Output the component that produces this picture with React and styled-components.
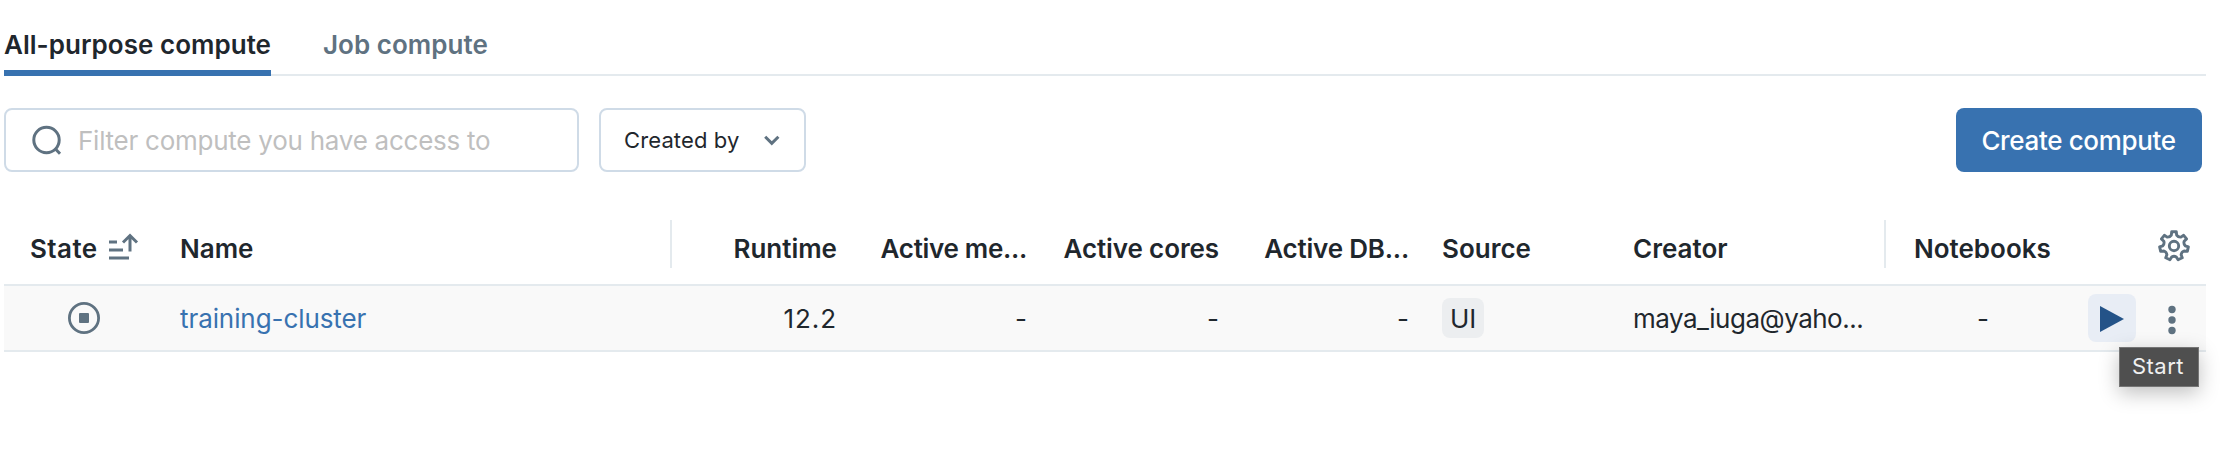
import React from "react";
import styled, { createGlobalStyle, css } from "styled-components";

const color = {
  text: "#1f272d",
  muted: "#5f7281",
  blue: "#3872b0",
  line: "#e4eaee",
  field: "#cfdbe7",
};

const GlobalStyle = createGlobalStyle`
  *, *::before, *::after { box-sizing: border-box; }
  body { margin: 0; background: #fff; }
  button, input { font: inherit; margin: 0; }
`;

const Page = styled.main`
  width: 2206px;
  min-height: 460px;
  padding-left: 4px;
  font-family: Inter, "Liberation Sans", sans-serif;
  font-size: 26px;
  line-height: 32px;
  color: ${color.text};
`;

const Tabs = styled.nav`
  display: flex;
  gap: 52px;
  height: 76px;
  padding-top: 29px;
  box-shadow: inset 0 -2px 0 ${color.line};
`;

const Tab = styled.button`
  display: block;
  padding: 0 0 9px;
  border: 0;
  border-bottom: 6px solid ${(p) => (p.$active ? color.blue : "transparent")};
  background: none;
  line-height: 32px;
  font-weight: 600;
  letter-spacing: 0.03px;
  white-space: nowrap;
  color: ${(p) => (p.$active ? color.text : color.muted)};
`;

const Toolbar = styled.div`
  display: flex;
  gap: 20px;
  padding: 32px 4px 0 0;
`;

const field = css`
  display: flex;
  align-items: center;
  height: 64px;
  border: 2px solid ${color.field};
  border-radius: 8px;
  background: #fff;
`;

const SearchField = styled.label`
  ${field}
  width: 575px;
  padding: 2px 0 0 26px;
  gap: 14px;
`;

const SearchInput = styled.input`
  flex: 1;
  min-width: 0;
  padding: 0;
  border: 0;
  outline: 0;
  background: none;
  letter-spacing: -0.25px;
  &::placeholder { color: #bfbfbf; opacity: 1; }
`;

const SelectButton = styled.button`
  ${field}
  width: 207px;
  justify-content: space-between;
  padding: 0 23px;
  font-size: 22px;
  letter-spacing: 0.12px;
  color: ${color.text};
`;

const PrimaryButton = styled.button`
  width: 246px;
  height: 64px;
  margin-left: auto;
  padding: 2px 1px 0 0;
  border: 0;
  border-radius: 8px;
  background: ${color.blue};
  color: #fff;
  font-weight: 500;
  letter-spacing: -0.35px;
`;

const Table = styled.section`
  margin-top: 32px;
`;

const columns = css`
  display: grid;
  grid-template-columns: 160px 508px 165px 190px 192px 190px 224px 253px 194px 126px;
  align-items: center;
`;

const HeaderRow = styled.div`
  ${columns}
  height: 82px;
  border-bottom: 2px solid ${color.line};
  font-weight: 600;
`;

const BodyRow = styled.div`
  ${columns}
  height: 66px;
  border-bottom: 2px solid ${color.line};
  background: #f9f9f9;
`;

const justify = { left: "flex-start", center: "center", right: "flex-end" };

const Cell = styled.div`
  display: flex;
  align-items: center;
  justify-content: ${(p) => justify[p.$align || "left"]};
  height: 48px;
  padding-top: ${(p) => p.$drop ?? 2}px;
  padding-left: ${(p) => p.$inset || 0}px;
  border-right: ${(p) => (p.$divider ? `2px solid ${color.line}` : "0")};
  letter-spacing: ${(p) => p.$tracking || 0}px;
  white-space: nowrap;
`;

const HeaderCell = styled(Cell)`
  padding-top: ${(p) => p.$drop ?? 9}px;
`;

const SortLabel = styled.span`
  margin-right: 11px;
  letter-spacing: 0.45px;
`;

const ClusterLink = styled.a`
  color: ${color.blue};
  letter-spacing: -0.08px;
`;

const SourceTag = styled.span`
  padding: 5px 8px 3px;
  margin-top: -2px;
  border-radius: 8px;
  background: #eceef0;
`;

const Actions = styled.div`
  display: flex;
  align-items: center;
  gap: 32px;
  padding-left: 8px;
`;

const StartAction = styled.div`
  position: relative;
  width: 48px;
  height: 48px;
`;

const StartButton = styled.button`
  display: flex;
  width: 48px;
  height: 48px;
  padding: 12px;
  border: 0;
  border-radius: 8px;
  background: #e8edf5;
`;

const Tooltip = styled.span`
  position: absolute;
  left: 31px;
  top: 53px;
  width: 80px;
  height: 40px;
  padding-right: 2px;
  border: 1px solid #757575;
  background: #4f4f4f;
  color: #f0f0f0;
  box-shadow: 0 6px 20px rgba(0, 0, 0, 0.25);
  font-size: 22px;
  line-height: 37px;
  letter-spacing: 0.5px;
  text-align: center;
`;

const Icon = styled.svg`
  display: block;
  flex: none;
  overflow: visible;
  fill: none;
  stroke: ${color.muted};
  stroke-width: ${(p) => p.$stroke || 3};
`;

const SearchIcon = () => (
  <Icon width="32" height="32" viewBox="0 0 32 32">
    <circle cx="14.5" cy="15" r="12.7" />
    <path d="M23 23.500l5 5.200" />
  </Icon>
);

const ChevronIcon = () => (
  <Icon width="18" height="12" viewBox="0 0 18 12">
    <path d="M2.200 2.700l6.600 6.600L15.400 2.700" />
  </Icon>
);

const SortIcon = () => (
  <Icon width="30" height="28" viewBox="0 0 30 28">
    <path d="M0 7h8M0 15h14M0 23h20M21 16.500V0.500M14 7.500l7-7 7 7" />
  </Icon>
);

const StoppedIcon = () => (
  <Icon width="32" height="32" viewBox="0 0 32 32" $stroke={2.8}>
    <circle cx="16" cy="16" r="14.6" />
    <rect x="11" y="11" width="10" height="10" rx="1" fill={color.muted} stroke="none" />
  </Icon>
);

// Seven-toothed cog: flat tooth tips joined by short curved valleys.
const gearPath = (() => {
  const step = (Math.PI * 2) / 7;
  const at = (angle, r) =>
    `${(16 + r * Math.cos(angle)).toFixed(2)} ${(16 + r * Math.sin(angle)).toFixed(2)}`;
  let d = "";
  for (let i = 0; i < 7; i += 1) {
    const a = -Math.PI / 2 + i * step;
    d += `${i ? "L" : "M"}${at(a - 0.16, 14.4)}L${at(a + 0.16, 14.4)}`;
    d += `L${at(a + 0.24, 11.2)}Q${at(a + step / 2, 9.6)} ${at(a + step - 0.24, 11.2)}`;
  }
  return `${d}Z`;
})();

const GearIcon = () => (
  <Icon width="32" height="32" viewBox="0 0 32 32" $stroke={2.9} strokeLinejoin="round">
    <path d={gearPath} />
    <circle cx="16" cy="16" r="4.7" />
  </Icon>
);

const PlayIcon = () => (
  <Icon width="24" height="26" viewBox="0 0 24 26">
    <path d="M0 0l24 13L0 26z" fill="#245388" stroke="none" />
  </Icon>
);

const MoreIcon = () => (
  <Icon width="8" height="30" viewBox="0 0 8 30">
    {[6.5, 17, 27.5].map((y) => (
      <circle key={y} cx="4" cy={y} r="3.7" fill={color.muted} stroke="none" />
    ))}
  </Icon>
);

export default function App() {
  return (
    <>
      <GlobalStyle />
      <Page>
        <Tabs>
          <Tab $active>All-purpose compute</Tab>
          <Tab>Job compute</Tab>
        </Tabs>
        <Toolbar>
          <SearchField>
            <SearchIcon />
            <SearchInput placeholder="Filter compute you have access to" />
          </SearchField>
          <SelectButton>
            Created by
            <ChevronIcon />
          </SelectButton>
          <PrimaryButton>Create compute</PrimaryButton>
        </Toolbar>
        <Table>
          <HeaderRow>
            <HeaderCell $inset={26}>
              <SortLabel>State</SortLabel>
              <SortIcon />
            </HeaderCell>
            <HeaderCell $inset={16} $divider>Name</HeaderCell>
            <HeaderCell $align="right">Runtime</HeaderCell>
            <HeaderCell $align="right" $tracking={-0.3}>Active me...</HeaderCell>
            <HeaderCell $align="right" $tracking={-0.1}>Active cores</HeaderCell>
            <HeaderCell $align="right" $tracking={-0.2}>Active DB...</HeaderCell>
            <HeaderCell $inset={33}>Source</HeaderCell>
            <HeaderCell $divider>Creator</HeaderCell>
            <HeaderCell $inset={28}>Notebooks</HeaderCell>
            <HeaderCell $inset={78} $drop={4}>
              <GearIcon />
            </HeaderCell>
          </HeaderRow>
          <BodyRow>
            <Cell $align="center" $drop={0}>
              <StoppedIcon />
            </Cell>
            <Cell $inset={16}>
              <ClusterLink>training-cluster</ClusterLink>
            </Cell>
            <Cell $align="right" $tracking={0.9}>12.2</Cell>
            <Cell $align="right">-</Cell>
            <Cell $align="right">-</Cell>
            <Cell $align="right">-</Cell>
            <Cell $inset={33}>
              <SourceTag>UI</SourceTag>
            </Cell>
            <Cell $tracking={-0.5}>maya_iuga@yaho...</Cell>
            <Cell $align="center">-</Cell>
            <Actions>
              <StartAction>
                <StartButton aria-label="Start">
                  <PlayIcon />
                </StartButton>
                <Tooltip role="tooltip">Start</Tooltip>
              </StartAction>
              <MoreIcon />
            </Actions>
          </BodyRow>
        </Table>
      </Page>
    </>
  );
}
